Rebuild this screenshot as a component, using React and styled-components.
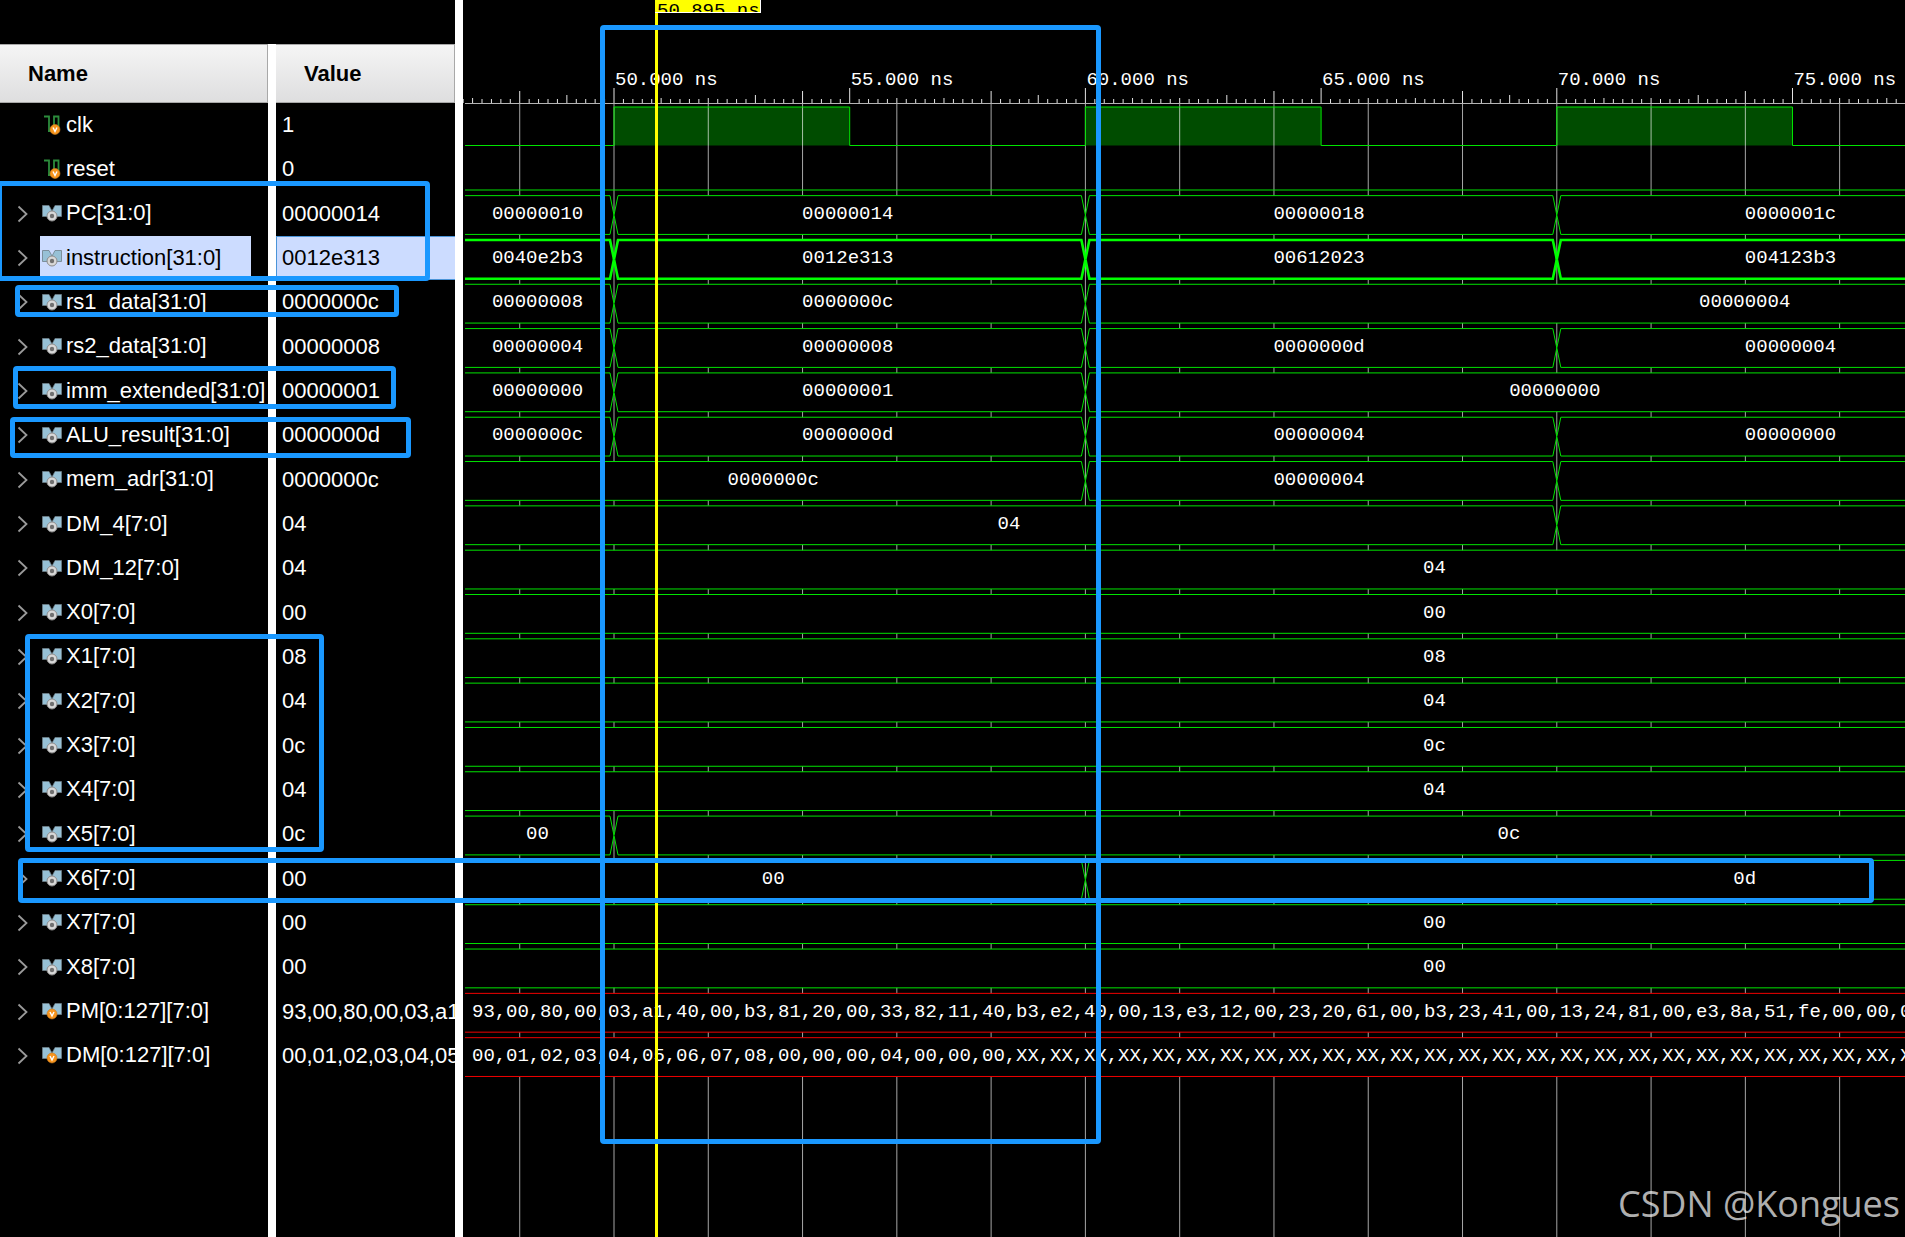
import React, { useState } from 'react';
import styled, { createGlobalStyle } from 'styled-components';

const GlobalStyle = createGlobalStyle`
  body {
    margin: 0;
    background-color: #000;
  }
  * {
    box-sizing: border-box;
  }
`;

// Time scale of the wave pane
const PX_PER_NS = 47.14;
const VIEW_WIDTH = 1943;
const ROWS = 22;
const ROWS_HEIGHT = 975;
const ROW_HEIGHT = ROWS_HEIGHT / ROWS;
const RULER_HEIGHT = 102;
const LINE_START = 2;

const xOf = (ns) => 151 + (ns - 50) * PX_PER_NS;

// waves are lists of [value, end time]; null runs to the end of the view
const signals = [
  { name: 'clk', value: '1', kind: 'clock' },
  { name: 'reset', value: '0', kind: 'low' },
  { name: 'PC[31:0]', value: '00000014', wave: [['00000010', 50], ['00000014', 60], ['00000018', 70], ['0000001c', 80]] },
  { name: 'instruction[31:0]', value: '0012e313', wave: [['0040e2b3', 50], ['0012e313', 60], ['00612023', 70], ['004123b3', 80]] },
  { name: 'rs1_data[31:0]', value: '0000000c', wave: [['00000008', 50], ['0000000c', 60], ['00000004', null]] },
  { name: 'rs2_data[31:0]', value: '00000008', wave: [['00000004', 50], ['00000008', 60], ['0000000d', 70], ['00000004', 80]] },
  { name: 'imm_extended[31:0]', value: '00000001', wave: [['00000000', 50], ['00000001', 60], ['00000000', 80]] },
  { name: 'ALU_result[31:0]', value: '0000000d', wave: [['0000000c', 50], ['0000000d', 60], ['00000004', 70], ['00000000', 80]] },
  { name: 'mem_adr[31:0]', value: '0000000c', wave: [['0000000c', 60], ['00000004', 70], ['', null]] },
  { name: 'DM_4[7:0]', value: '04', wave: [['04', 70], ['', null]] },
  { name: 'DM_12[7:0]', value: '04', wave: [['04', null]] },
  { name: 'X0[7:0]', value: '00', wave: [['00', null]] },
  { name: 'X1[7:0]', value: '08', wave: [['08', null]] },
  { name: 'X2[7:0]', value: '04', wave: [['04', null]] },
  { name: 'X3[7:0]', value: '0c', wave: [['0c', null]] },
  { name: 'X4[7:0]', value: '04', wave: [['04', null]] },
  { name: 'X5[7:0]', value: '0c', wave: [['00', 50], ['0c', null]] },
  { name: 'X6[7:0]', value: '00', wave: [['00', 60], ['0d', null]] },
  { name: 'X7[7:0]', value: '00', wave: [['00', null]] },
  { name: 'X8[7:0]', value: '00', wave: [['00', null]] },
  {
    name: 'PM[0:127][7:0]',
    value: '93,00,80,00,03,a1',
    kind: 'memory',
    bytes: '93,00,80,00,03,a1,40,00,b3,81,20,00,33,82,11,40,b3,e2,40,00,13,e3,12,00,23,20,61,00,b3,23,41,00,13,24,81,00,e3,8a,51,fe,00,00,00',
  },
  {
    name: 'DM[0:127][7:0]',
    value: '00,01,02,03,04,05',
    kind: 'memory',
    bytes: '00,01,02,03,04,05,06,07,08,00,00,00,04,00,00,00' + ',XX'.repeat(27),
  },
];

const Viewer = styled.main`
  position: relative;
  display: flex;
  min-height: 100vh;
  overflow: hidden;
  background-color: #000;
  color: #fff;
`;

const SignalTable = styled.table`
  display: grid;
  flex: none;
  grid-template-rows: 59px ${ROWS_HEIGHT}px;
  width: 455px;
  margin-top: 44px;
  font-family: 'Liberation Sans', Arial, sans-serif;
  font-size: 22px;
  line-height: 26px;
  background: linear-gradient(to right, #000 268px, #fff 268px, #fff 276px, #000 276px);
`;

const TableHead = styled.thead`
  display: grid;
`;

const TableBody = styled.tbody`
  display: grid;
  grid-template-rows: repeat(${ROWS}, 1fr);
`;

const TableRow = styled.tr`
  display: grid;
  grid-template-columns: 268px 179px;
  column-gap: 8px;
  min-height: 0;
`;

const HeadCell = styled.th`
  display: flex;
  align-items: center;
  padding: 0 0 0 28px;
  color: #000;
  font-weight: bold;
  background: linear-gradient(#f5f5f5, #dededf);
  border: solid #a8a8a8;
  border-width: 1px 1px 1px 0;
`;

const NameCell = styled.td`
  display: flex;
  min-width: 0;
  padding: 0 0 0 17px;
  overflow: hidden;
  white-space: nowrap;
`;

const ExpandButton = styled.button`
  flex: none;
  display: flex;
  align-items: center;
  width: 11px;
  padding: 0;
  background: none;
  border: none;
  cursor: pointer;
`;

const ExpandSpace = styled.span`
  flex: none;
  width: 11px;
`;

const SignalLabel = styled.span`
  display: flex;
  flex: none;
  align-items: center;
  gap: 4px;
  margin: 0 0 4px 12px;
  padding: 3px 30px 0 2px;
  cursor: default;
  color: ${(props) => (props.$selected ? '#000' : '#fff')};
  background-color: ${(props) => (props.$selected ? '#ccdcff' : 'transparent')};
`;

const SignalIcon = styled.svg`
  flex: none;
  width: 20px;
  height: 20px;
`;

const ValueCell = styled.td`
  display: flex;
  align-items: center;
  min-width: 0;
  padding: 0 0 0 5px;
  overflow: hidden;
  white-space: nowrap;
  border: 1px solid ${(props) => (props.$selected ? '#4a94d8' : 'transparent')};
  border-right: none;
  color: ${(props) => (props.$selected ? '#000' : '#fff')};
  background-color: ${(props) => (props.$selected ? '#ccdcff' : 'transparent')};
`;

const Splitter = styled.div`
  flex: none;
  width: 8px;
  background-color: #fff;
`;

const WavePane = styled.section`
  position: relative;
  flex: 1;
  min-width: 0;
  overflow: hidden;
  font-family: 'Liberation Mono', 'Courier New', monospace;
  font-size: 19px;
  line-height: 22px;
`;

// the drawing lies under the texts of the lanes
const WaveDrawing = styled.svg`
  position: absolute;
  top: 0;
  left: 0;
  width: 100%;
  height: 100%;
`;

const Ruler = styled.div`
  position: relative;
  display: flex;
  align-items: flex-end;
  height: ${RULER_HEIGHT}px;
  padding-bottom: 11px;
`;

const RulerLabel = styled.span`
  flex: none;
  padding-left: 1px;
  white-space: nowrap;
`;

const Lanes = styled.div`
  position: relative;
  display: grid;
  grid-template-rows: repeat(${ROWS}, 1fr);
  height: ${ROWS_HEIGHT}px;
`;

const Lane = styled.div`
  display: flex;
  align-items: center;
  min-height: 0;
  padding-top: 2px;
`;

const Segment = styled.span`
  flex: none;
  text-align: center;
`;

const ByteList = styled.div`
  display: grid;
  grid-auto-flow: column;
  grid-auto-columns: 34px;
  padding-left: 9px;
`;

const Marker = styled.div`
  position: absolute;
  top: 0;
  bottom: 0;
  left: 192px;
  width: 3px;
  background-color: #ff0;
`;

const MarkerLabel = styled.div`
  width: 106px;
  height: 13px;
  padding-left: 2px;
  overflow: hidden;
  white-space: nowrap;
  color: #000;
  background-color: #ff0;
  border: solid #fff;
  border-width: 0 1px 1px 0;
`;

const Highlight = styled.div`
  position: absolute;
  top: ${(props) => props.$top}px;
  left: ${(props) => props.$left}px;
  width: ${(props) => props.$width}px;
  height: ${(props) => props.$height}px;
  border: 5px solid #1a98ff;
  border-radius: 4px;
  pointer-events: none;
`;

const Watermark = styled.div`
  position: absolute;
  right: 5px;
  bottom: 9px;
  font-family: 'Open Sans', sans-serif;
  font-size: 36px;
  line-height: 48px;
  color: rgba(255, 255, 255, 0.7);
`;

const OrangeBadge = ({ cx, cy }) => (
  <g>
    <circle cx={cx} cy={cy} r="5" fill="#f7941d" stroke="#c87a1c" strokeWidth="0.6" />
    <path d={`M${cx - 2} ${cy - 2} L${cx} ${cy + 2} L${cx + 2} ${cy - 2}`} fill="none" stroke="#fff" strokeWidth="1.4" />
  </g>
);

const ScalarIcon = () => (
  <SignalIcon viewBox="0 0 20 20" aria-hidden="true">
    <path d="M2 1.5 H7 V16 M6 16 H11 M12 12 V1.5 H16.5 V12" fill="none" stroke="#2c8c3c" strokeWidth="1.8" />
    <OrangeBadge cx={13} cy={14.5} />
  </SignalIcon>
);

const BusIcon = ({ memory }) => (
  <SignalIcon viewBox="0 0 20 20" aria-hidden="true">
    <path d="M0.5 2.5 H7 L10 8 L13 2.5 H19.5 V13.5 H0.5 Z" fill="#97c1d6" stroke="#6e7f88" strokeWidth="0.8" />
    {memory ? (
      <OrangeBadge cx={10} cy={13} />
    ) : (
      <g>
        <circle cx="10" cy="13" r="5" fill="#d8d8d8" stroke="#8c8c8c" strokeWidth="1" />
        <circle cx="10" cy="13" r="2.2" fill="#707070" />
      </g>
    )}
  </SignalIcon>
);

const Chevron = () => (
  <svg width="11" height="18" viewBox="0 0 11 18" aria-hidden="true">
    <path d="M1.5 1.5 L9.5 9 L1.5 16.5" fill="none" stroke="#9a9a9a" strokeWidth="1.8" />
  </svg>
);

const tickTop = (step) => {
  // step counts fifths of a nanosecond
  if (step % 5 !== 0) return 99;
  const ns = step / 5;
  if (ns % 5 === 0) return 88;
  if (ns % 10 === 4 || ns % 10 === 8) return 91;
  if (ns % 10 === 3 || ns % 10 === 9) return 95;
  return 98;
};

const BusShape = ({ wave, y, selected }) => {
  const top = y + 5;
  const bottom = y + 43.8;
  const mid = (top + bottom) / 2;
  let start = null;
  return wave.map(([, end], index) => {
    const first = start === null;
    const x0 = first ? LINE_START : xOf(start);
    const x1 = end === null ? VIEW_WIDTH : xOf(end);
    const head = first ? `M${x0} ${top}` : `M${x0} ${mid} L${x0 + 4} ${top}`;
    const tail = first ? `L${x0} ${bottom}` : `L${x0 + 4} ${bottom} L${x0} ${mid}`;
    start = end;
    return (
      <path
        key={index}
        d={`${head} L${x1 - 4} ${top} L${x1} ${mid} L${x1 - 4} ${bottom} ${tail}`}
        fill="#000"
        stroke={selected ? '#00ff00' : '#00e400'}
        strokeWidth={selected ? 2.6 : 1}
      />
    );
  });
};

const Waves = ({ selected }) => {
  const steps = Array.from({ length: 157 }, (_, i) => 234 + i);
  const gridTimes = Array.from({ length: 16 }, (_, i) => 48 + i * 2);
  return (
    <WaveDrawing aria-hidden="true">
      {[50, 60, 70].map((ns) => (
        <rect key={ns} x={xOf(ns)} y="107" width={5 * PX_PER_NS} height="38.5" fill="#004c00" />
      ))}
      {gridTimes.map((ns) => (
        <line key={ns} x1={xOf(ns)} x2={xOf(ns)} y1="103" y2="100%" stroke="#fff" strokeOpacity="0.65" />
      ))}
      {steps.map((step) => (
        <line key={step} x1={xOf(step / 5)} x2={xOf(step / 5)} y1={tickTop(step)} y2="103" stroke="#e4e4e4" />
      ))}
      <line x1={LINE_START} x2="100%" y1="103.5" y2="103.5" stroke="#b4b4b4" />
      <path
        d={
          `M${LINE_START} 145.5 ` +
          [50, 60, 70].map((ns) => `H${xOf(ns)} V107 H${xOf(ns + 5)} V145.5`).join(' ') +
          ` H${VIEW_WIDTH}`
        }
        fill="none"
        stroke="#00e400"
      />
      <line x1={LINE_START} x2={VIEW_WIDTH} y1="190" y2="190" stroke="#00e400" />
      {signals.map((signal, index) => {
        const y = RULER_HEIGHT + index * ROW_HEIGHT;
        if (signal.bytes) {
          return (
            <g key={signal.name} stroke="#f00000">
              <rect x={LINE_START} y={y + 5} width={VIEW_WIDTH} height="38.8" stroke="none" />
              <path d={`M${LINE_START} ${y + 5} H${VIEW_WIDTH} M${LINE_START} ${y + 43.8} H${VIEW_WIDTH}`} />
            </g>
          );
        }
        return signal.wave && index !== selected ? <BusShape key={signal.name} wave={signal.wave} y={y} /> : null;
      })}
      {signals[selected].wave && (
        <BusShape wave={signals[selected].wave} y={RULER_HEIGHT + selected * ROW_HEIGHT} selected />
      )}
    </WaveDrawing>
  );
};

const WaveLane = ({ signal }) => {
  if (signal.bytes) {
    const bytes = signal.bytes.split(',');
    return (
      <Lane>
        <ByteList>
          {bytes.map((byte, index) => (
            <span key={index}>{index < bytes.length - 1 ? `${byte},` : byte}</span>
          ))}
        </ByteList>
      </Lane>
    );
  }
  let start = 0;
  return (
    <Lane>
      {(signal.wave || []).map(([value, end], index) => {
        // centred on the flat part of the bus, before its crossing
        const x1 = end === null ? VIEW_WIDTH : xOf(end) - 2;
        const width = x1 - start;
        start = x1;
        return <Segment key={index} style={{ width }}>{value}</Segment>;
      })}
    </Lane>
  );
};

const App = () => {
  const [selected, setSelected] = useState(3);

  return (
    <Viewer>
      <GlobalStyle />
      <SignalTable>
        <TableHead>
          <TableRow>
            <HeadCell scope="col">Name</HeadCell>
            <HeadCell scope="col">Value</HeadCell>
          </TableRow>
        </TableHead>
        <TableBody>
          {signals.map((signal, index) => (
            <TableRow key={signal.name} onClick={() => setSelected(index)}>
              <NameCell>
                {signal.wave || signal.bytes ? (
                  <ExpandButton type="button" aria-label={`Expand ${signal.name}`}>
                    <Chevron />
                  </ExpandButton>
                ) : (
                  <ExpandSpace />
                )}
                <SignalLabel $selected={index === selected}>
                  {signal.wave || signal.bytes ? <BusIcon memory={signal.kind === 'memory'} /> : <ScalarIcon />}
                  {signal.name}
                </SignalLabel>
              </NameCell>
              <ValueCell $selected={index === selected}>{signal.value}</ValueCell>
            </TableRow>
          ))}
        </TableBody>
      </SignalTable>
      <Splitter />
      <WavePane>
        <Waves selected={selected} />
        <Ruler style={{ paddingLeft: xOf(50) }}>
          {[50, 55, 60, 65, 70, 75].map((ns) => (
            <RulerLabel key={ns} style={{ width: 5 * PX_PER_NS }}>{`${ns}.000 ns`}</RulerLabel>
          ))}
        </Ruler>
        <Lanes>
          {signals.map((signal) => (
            <WaveLane key={signal.name} signal={signal} />
          ))}
        </Lanes>
        <Marker>
          <MarkerLabel>50.895 ns</MarkerLabel>
        </Marker>
      </WavePane>
      {/* Highlight boxes over both panes */}
      <Highlight $left={-3} $top={181} $width={433} $height={100} />
      <Highlight $left={15} $top={285} $width={384} $height={32} />
      <Highlight $left={13} $top={366} $width={383} $height={43} />
      <Highlight $left={10} $top={417} $width={401} $height={41} />
      <Highlight $left={25} $top={634} $width={299} $height={218} />
      <Highlight $left={18} $top={858} $width={1856} $height={45} />
      <Highlight $left={600} $top={25} $width={501} $height={1119} />
      <Watermark>CSDN @Kongues</Watermark>
    </Viewer>
  );
};

export default App;
